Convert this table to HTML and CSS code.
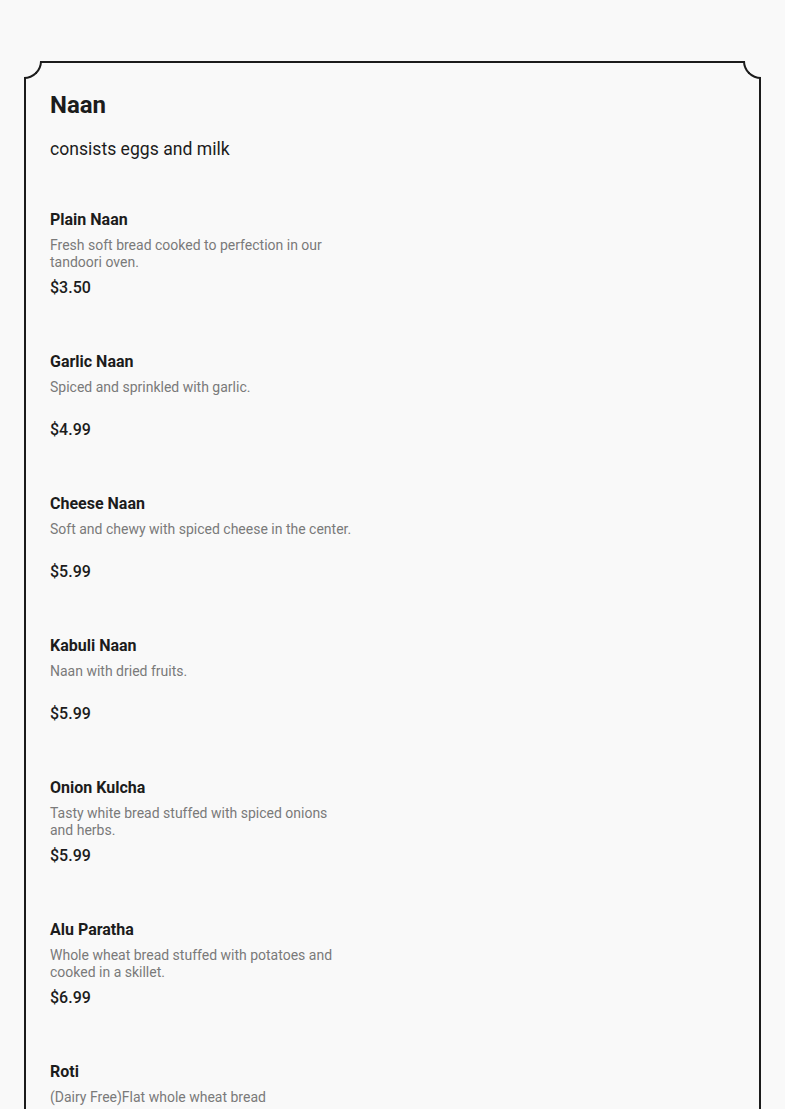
FILE: index.html
```html
<!DOCTYPE html>
<html lang="en">
<head>
<meta charset="utf-8">
<title>Naan</title>
<link rel="stylesheet" href="styles.css">
</head>
<body>
<section class="menu-card">
  <span class="corner corner-left"></span>
  <span class="corner corner-right"></span>
  <h1 class="section-title">Naan</h1>
  <p class="section-note">consists eggs and milk</p>
  <ul class="items">
    <li class="item">
      <h2 class="item-name">Plain Naan</h2>
      <p class="item-desc">Fresh soft bread cooked to perfection in our tandoori oven.</p>
      <p class="item-price">$3.50</p>
    </li>
    <li class="item">
      <h2 class="item-name">Garlic Naan</h2>
      <p class="item-desc">Spiced and sprinkled with garlic.</p>
      <p class="item-price">$4.99</p>
    </li>
    <li class="item">
      <h2 class="item-name">Cheese Naan</h2>
      <p class="item-desc">Soft and chewy with spiced cheese in the center.</p>
      <p class="item-price">$5.99</p>
    </li>
    <li class="item">
      <h2 class="item-name">Kabuli Naan</h2>
      <p class="item-desc">Naan with dried fruits.</p>
      <p class="item-price">$5.99</p>
    </li>
    <li class="item">
      <h2 class="item-name">Onion Kulcha</h2>
      <p class="item-desc">Tasty white bread stuffed with spiced onions and herbs.</p>
      <p class="item-price">$5.99</p>
    </li>
    <li class="item">
      <h2 class="item-name">Alu Paratha</h2>
      <p class="item-desc">Whole wheat bread stuffed with potatoes and cooked in a skillet.</p>
      <p class="item-price">$6.99</p>
    </li>
    <li class="item">
      <h2 class="item-name">Roti</h2>
      <p class="item-desc">(Dairy Free)Flat whole wheat bread</p>
      <p class="item-price">$2.99</p>
    </li>
  </ul>
</section>
</body>
</html>
```

FILE: styles.css
```css
html, body {
  margin: 0;
  padding: 0;
  background: #f9f9f9;
}
body {
  font-family: Roboto, "Liberation Sans", Arial, sans-serif;
  color: #1c1c1c;
}
.menu-card {
  position: relative;
  margin: 61px 24px 0 24px;
  border: 2px solid #1c1c1c;
  border-bottom: none;
  padding: 27px 24px 40px 24px;
  min-height: 1100px;
}
.corner {
  position: absolute;
  top: -2px;
  width: 16px;
  height: 16px;
  background: #f9f9f9;
  border-bottom: 2px solid #1c1c1c;
}
.corner-left {
  left: -2px;
  border-right: 2px solid #1c1c1c;
  border-bottom-right-radius: 18px;
}
.corner-right {
  right: -2px;
  border-left: 2px solid #1c1c1c;
  border-bottom-left-radius: 18px;
}
.section-title {
  margin: 0;
  font-size: 24px;
  line-height: 30px;
  font-weight: 700;
}
.section-note {
  margin: 17px 0 0 0;
  font-size: 17.6px;
  line-height: 24px;
  font-weight: 400;
}
.items {
  list-style: none;
  margin: 49px 0 0 0;
  padding: 0;
  display: flex;
  flex-direction: column;
  gap: 54px;
}
.item {
  width: 303px;
}
.item-name {
  margin: 0;
  font-size: 16px;
  line-height: 20px;
  font-weight: 700;
}
.item-desc {
  margin: 7px 0 0 0;
  font-size: 14px;
  line-height: 17px;
  min-height: 34px;
  color: #7a7a7a;
}
.item-price {
  margin: 7px 0 0 0;
  font-size: 16px;
  line-height: 20px;
  font-weight: 500;
}
```
